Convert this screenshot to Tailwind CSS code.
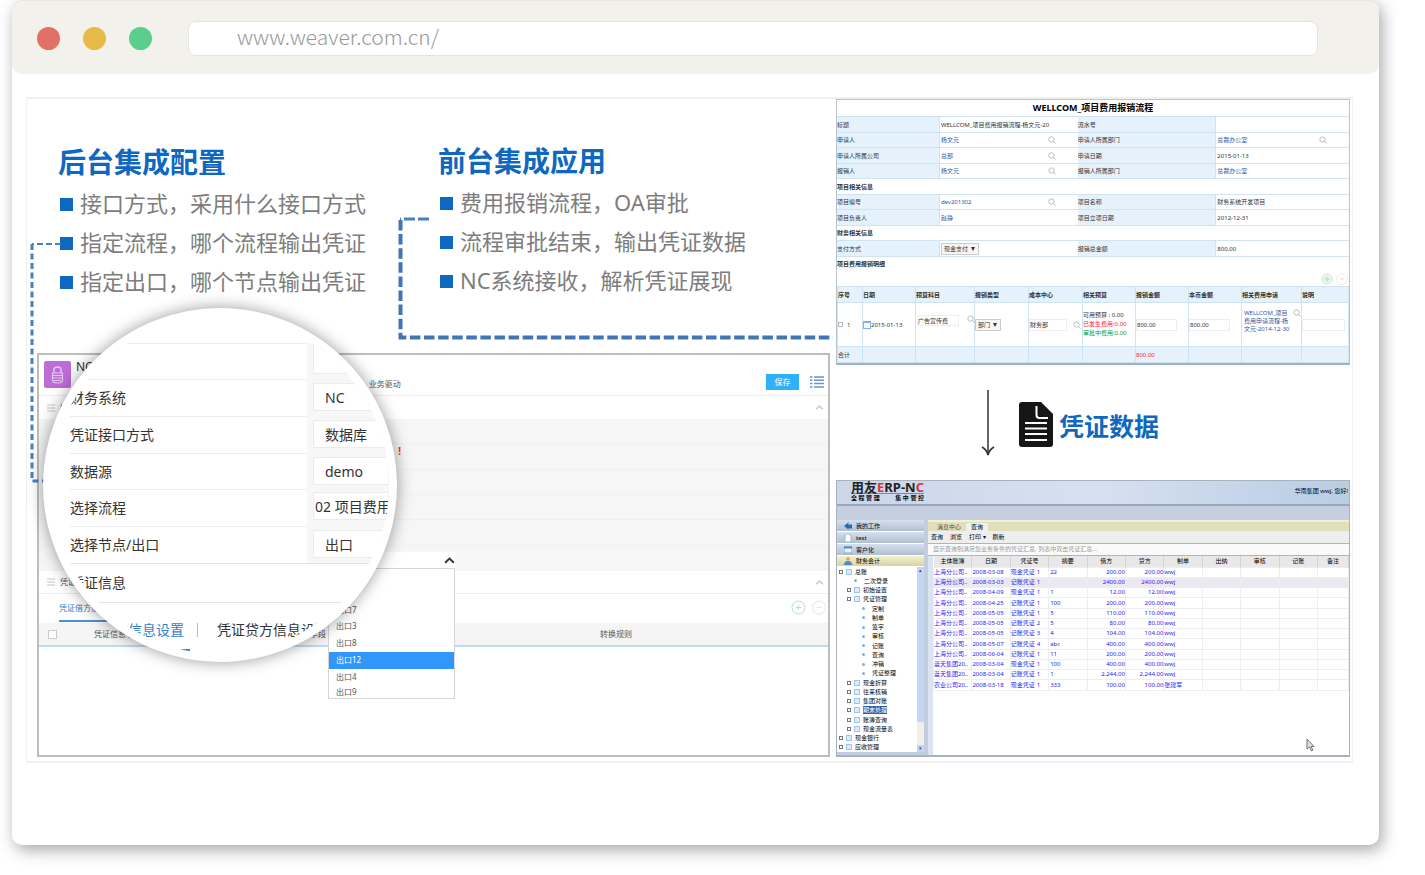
<!DOCTYPE html>
<html lang="zh-CN">
<head>
<meta charset="utf-8">
<title>www.weaver.com.cn</title>
<script src="https://cdn.jsdelivr.net/npm/@tailwindcss/browser@4"></script>
</head>
<body class="min-h-screen bg-white font-['Noto_Sans','Noto_Sans_CJK_SC',sans-serif]">
<svg class="hidden">
  <symbol id="search" viewBox="0 0 8 8"><circle cx="3.5" cy="3.5" r="2.7" fill="none" stroke="#b5b5b5" stroke-width=".9"/><path d="M5.5 5.5 7.6 7.4" stroke="#b5b5b5" stroke-width="1"/></symbol>
  <symbol id="chev" viewBox="0 0 10 6"><path d="M1 5 5 1.3 9 5" fill="none" stroke="currentColor" stroke-width="1.8"/></symbol>
  <symbol id="down" viewBox="0 0 4 4"><path d="M0 0h4L2 4z" fill="#333"/></symbol>
  <symbol id="rows" viewBox="0 0 8 8"><path d="M0 1h8M0 4h8M0 7h8" stroke="#c4c4c4" stroke-width="1"/></symbol>
</svg>
<div class="ml-3 mr-[46px] rounded-[10px] bg-white pb-[82px] shadow-[3px_5px_16px_rgba(0,0,0,0.35)]">
  <header class="flex h-[74px] items-center rounded-[10px] border-t border-[#e6e6e4] bg-[#f3f1ec] pb-[1px] pl-[25px] pr-[61px]">
    <div class="flex gap-[23px] pt-[2px]">
      <span class="size-[23px] rounded-full bg-[#e17065]"></span>
      <span class="size-[23px] rounded-full bg-[#e7bb49]"></span>
      <span class="size-[23px] rounded-full bg-[#5bcd8c]"></span>
    </div>
    <input aria-label="网址" value="www.weaver.com.cn/" class="ml-[36px] mt-[2px] h-[35px] min-w-0 flex-1 rounded-[8px] border border-[#e4e4e2] bg-white pb-[4px] pl-12 font-['Noto_Sans_CJK_SC',sans-serif] text-[21px] font-light text-[#999]">
  </header>

  <main class="relative ml-[14px] mr-[26px] mt-[23px] grid grid-cols-[803fr_514fr] gap-x-[6px] border-2 border-l border-r border-[#f0f0f0] pb-[4px] pr-[2px]">
    <svg class="pointer-events-none absolute left-0 top-0 z-10 h-[390px] w-[810px] overflow-visible" fill="none" stroke="#4a7fc0">
      <path d="M34 145H5" stroke-width="2" stroke-dasharray="6 3"/>
      <path d="M5 145V382H18" stroke-width="3" stroke-dasharray="6 3.5"/>
      <path d="M402 120H373" stroke-width="3" stroke-dasharray="11 3"/>
      <path d="M373.500 121V238.500H806" stroke-width="4" stroke="#4275b5" stroke-dasharray="10.500 3.600"/>
    </svg>

    <div class="flex flex-col">
      <section class="grid h-[254px] grid-cols-[380fr_392fr] pl-[31px] text-[22px] text-[#7d7d7d]">
        <div class="pt-[42px]">
          <h2 class="h-[43px] text-[28px] font-bold leading-[42px] text-[#0f68bf]">后台集成配置</h2>
          <ul>
            <li class="flex h-[39px] items-center gap-[7px] whitespace-nowrap pl-[2px]"><i class="mt-[2px] size-[13px] bg-[#0f68bf]"></i>接口方式，采用什么接口方式</li>
            <li class="flex h-[39px] items-center gap-[7px] whitespace-nowrap pl-[2px]"><i class="mt-[2px] size-[13px] bg-[#0f68bf]"></i>指定流程，哪个流程输出凭证</li>
            <li class="flex h-[39px] items-center gap-[7px] whitespace-nowrap pl-[2px]"><i class="mt-[2px] size-[13px] bg-[#0f68bf]"></i>指定出口，哪个节点输出凭证</li>
          </ul>
        </div>
        <div class="pt-[41px]">
          <h2 class="h-[43px] text-[28px] font-bold leading-[42px] text-[#0f68bf]">前台集成应用</h2>
          <ul>
            <li class="flex h-[39px] items-center gap-[7px] whitespace-nowrap pl-[2px]"><i class="mt-[2px] size-[13px] bg-[#0f68bf]"></i>费用报销流程，OA审批</li>
            <li class="flex h-[39px] items-center gap-[7px] whitespace-nowrap pl-[2px]"><i class="mt-[2px] size-[13px] bg-[#0f68bf]"></i>流程审批结束，输出凭证数据</li>
            <li class="flex h-[39px] items-center gap-[7px] whitespace-nowrap pl-[2px]"><i class="mt-[2px] size-[13px] bg-[#0f68bf]"></i>NC系统接收，解析凭证展现</li>
          </ul>
        </div>
      </section>

      <section class="relative ml-[10px] flex-1 border-2 border-[#bdbdbd] bg-white text-[8px] text-[#555]">
        <div class="flex h-[41px] border-b border-[#ececec] pl-[5px] pr-[4px] pt-[6px]">
          <span class="flex size-[27px] items-center justify-center rounded-[2px] bg-[#bd6dd6]">
            <svg class="h-[18px] w-[13px]" viewBox="0 0 13 18" fill="none" stroke="#e6c6f0"><path d="M3 7V4q0-3 3.500-3T10 4v3" stroke-width="1.500"/><path d="M1.500 7h10v7q0 3-5 3t-5-3zM1.500 9.500h10M1.500 12h10M3 14.500h7" stroke-width="1.200"/></svg>
          </span>
          <span class="ml-[5px] text-[12px] leading-3 text-[#333]">NC</span>
          <span class="ml-[276px] pt-[17px] leading-3">业务驱动</span>
          <button class="ml-auto mt-[13px] h-4 w-[33px] bg-[#2fb1fa] text-[8px] leading-4 text-white">保存</button>
          <svg class="ml-[11px] mt-[15px] h-3 w-[14px]" viewBox="0 0 14 12" stroke="#6c93cd" stroke-width="1.500"><path d="M0 1h2.500M4 1h10M0 4.300h2.500M4 4.300h10M0 7.600h2.500M4 7.600h10M0 11h2.500M4 11h10"/></svg>
        </div>
        <div class="flex h-[23px] items-center pl-2 pr-[4px]"><svg class="size-2"><use href="#rows"/></svg><span class="ml-[5px]">接口信息</span><svg class="ml-auto h-[5px] w-[9px] text-[#ccc]"><use href="#chev"/></svg></div>
        <div class="grid h-[152px] grid-rows-6 divide-y divide-[#f0f0f0] bg-[#f6f6f6]">
          <div></div><div class="pl-[359px] text-[11px] font-bold leading-[14px] text-[#f04030]">!</div><div></div><div></div><div></div><div></div>
        </div>
        <div class="flex h-[23px] items-center border-b border-[#ededed] pl-2 pr-[4px]"><svg class="size-2"><use href="#rows"/></svg><span class="ml-[5px]">凭证信息</span><svg class="ml-auto h-[5px] w-[9px] text-[#ccc]"><use href="#chev"/></svg></div>
        <div class="flex h-[29px] pl-5 pr-[1px]">
          <a href="#debit" class="h-[28px] border-b-2 border-[#4a90d6] text-[8px] leading-7 text-[#2f7fd0]">凭证借方信息设置</a>
          <svg class="ml-auto mt-[6px] h-[15px] w-[36px] shrink-0" viewBox="0 0 36 15" fill="none"><circle cx="7.500" cy="7.500" r="6.500" stroke="#b9e0be"/><path d="M5 7.500h5M7.500 5v5" stroke="#b9e0be"/><circle cx="28" cy="7.500" r="6.500" stroke="#efe3d9"/><path d="M25.500 7.500h5" stroke="#efe3d9"/></svg>
        </div>
        <div class="flex h-[24px] items-center border-b-2 border-[#b9dcf7] bg-[#f5f5f5] pl-[9px]">
          <input type="checkbox" aria-label="全选" class="size-[9px] appearance-none border border-[#ccc] bg-white">
          <span class="w-[220px] pl-[37px] whitespace-nowrap">凭证信息字段</span><span class="flex-1 pl-[33px]">字段</span><span class="w-[228px]">转换规则</span>
        </div>

        <div class="absolute left-[289px] top-[197px] w-[127px]">
          <button aria-label="展开出口列表" class="flex h-4 w-full items-center justify-end bg-white"><svg class="h-[7px] w-[11px] text-[#333]"><use href="#chev"/></svg></button>
          <ul role="listbox" aria-label="选择节点/出口" class="h-[131px] overflow-hidden border border-[#d5d5d5] bg-white pt-[33px] text-[8px] leading-[16px]">
            <li role="option" class="h-[16px] pl-[7px]">出口7</li><li role="option" class="h-[17px] pl-[7px]">出口3</li><li role="option" class="h-[17px] pl-[7px]">出口8</li><li role="option" aria-selected="true" class="h-[17px] bg-[#3197fd] pl-[7px] text-white">出口12</li><li role="option" class="h-[16px] pl-[7px]">出口4</li><li role="option" class="h-[13px] pl-[7px] leading-[14px]">出口9</li>
          </ul>
        </div>

        <div class="absolute left-[4px] top-[-47px] z-20 size-[354px] overflow-hidden rounded-full border-8 border-white bg-white text-[14px] text-[#333] shadow-[0_0_16px_rgba(0,0,0,0.4)]">
          <div class="h-[27px]"></div>
          <div class="ml-[19px] grid grid-cols-[237px_1fr]">
            <span class="h-[36px] border-t border-[#ededed]"></span><div class="bg-[#f7f7f7] pl-[6px] pt-[1px]"><div class="h-[30px] border border-[#ebebeb] bg-white"></div></div>
            <label for="f1" class="h-[37px] border-t border-[#ededed] leading-[35px]">财务系统</label><div class="bg-[#f7f7f7] pl-[6px] pt-[4px]"><input id="f1" value="NC" class="h-[28px] w-full border border-[#ebebeb] bg-white pl-[11px]"></div>
            <label for="f2" class="h-[37px] border-t border-[#ededed] leading-[35px]">凭证接口方式</label><div class="bg-[#f7f7f7] pl-[6px] pt-[4px]"><input id="f2" value="数据库" class="h-[28px] w-full border border-[#ebebeb] bg-white pl-[11px]"></div>
            <label for="f3" class="h-[36px] border-t border-[#ededed] leading-[35px]">数据源</label><div class="bg-[#f7f7f7] pl-[6px] pt-[4px]"><input id="f3" value="demo" class="h-[28px] w-full border border-[#ebebeb] bg-white pl-[11px]"></div>
            <label for="f4" class="h-[37px] border-t border-[#ededed] leading-[35px]">选择流程</label><div class="bg-[#f7f7f7] pl-[6px] pt-[3px]"><input id="f4" value="02 项目费用" class="h-[28px] w-full border border-[#ebebeb] bg-white pl-[1px]"></div>
            <label for="f5" class="h-[37px] border-t border-[#ededed] leading-[35px]">选择节点/出口</label><div class="bg-[#f7f7f7] pl-[6px] pt-[4px]"><input id="f5" value="出口" class="h-[28px] w-full border border-[#ebebeb] bg-white pl-[11px]"></div>
          </div>
          <div class="ml-[19px] h-[40px] border-y border-[#e4e4e4] leading-[37px]">凭证信息</div>
          <div class="flex h-[46px] whitespace-nowrap pl-[21px] leading-[54px]"><a href="#debit" class="text-[#2f7fd0]">凭证借方信息设置</a><span class="ml-[13px] mt-[20px] h-[14px] w-px bg-[#bbb]"></span><a href="#credit" class="ml-[19px]">凭证贷方信息设置</a></div>
          <div class="ml-[119px] h-[2px] w-5 bg-[#2f8ee0]"></div>
        </div>
      </section>
    </div>

    <div class="min-w-0 text-[6px] leading-[8px] text-[#333]">
      <section class="border border-[#b8c4d0] border-b-2 border-b-[#9fb0c2] bg-white">
        <h3 class="h-[16px] text-center text-[9px] font-bold leading-[16px] text-black">WELLCOM_项目费用报销流程</h3>
        <table class="w-full table-fixed border-collapse">
          <colgroup><col class="w-[20%]"><col class="w-[27%]"><col class="w-[27%]"><col></colgroup>
          <tbody id="form"></tbody>
        </table>
        <h4 class="h-[15px] font-bold leading-[15px]">项目费用报销明细</h4>
        <div class="flex h-[14px] items-center justify-end"><svg class="h-3 w-[28px]" viewBox="0 0 28 12" fill="none"><circle cx="6" cy="6" r="5.500" fill="#e6f5e6" stroke="#e0f1e0"/><path d="M3.500 6h5M6 3.500v5" stroke="#b8dfb8"/><circle cx="21" cy="6" r="5.500" stroke="#f3ebe2"/><path d="M18.500 6h5" stroke="#ecdccd"/></svg></div>
        <table class="w-full table-fixed border-collapse text-left whitespace-nowrap [&_td]:border [&_td]:border-[#cfe3f3] [&_td]:p-0 [&_th]:border [&_th]:border-[#cfe3f3] [&_th]:p-0">
          <colgroup><col class="w-[25px]"><col class="w-[53px]"><col class="w-[59px]"><col class="w-[54px]"><col class="w-[54px]"><col class="w-[53px]"><col class="w-[53px]"><col class="w-[53px]"><col class="w-[60px]"><col></colgroup>
          <tr class="h-4 bg-[#e5f2fc]"><th>序号</th><th>日期</th><th>预算科目</th><th>报销类型</th><th>成本中心</th><th>相关预算</th><th>报销金额</th><th>本币金额</th><th>相关费用申请</th><th>说明</th></tr>
          <tr class="h-[44px]">
            <td><div class="flex items-center gap-1"><input type="checkbox" aria-label="选择第1行" class="size-[5px] appearance-none border border-[#bbb]"><span>1</span></div></td>
            <td><div class="flex items-center"><i class="size-2 border border-t-2 border-[#7db4e6]"></i>2015-01-13</div></td>
            <td><div class="flex items-start pb-2 pl-[1px]"><input aria-label="预算科目" value="广告宣传费" class="h-[11px] w-[42px] border border-[#eee]"><svg class="ml-2 size-2 shrink-0"><use href="#search"/></svg></div></td>
            <td><div class="flex h-3 w-[26px] items-center border border-[#ccc] bg-[#f5f5f5] pr-[3px]"><select aria-label="报销类型" class="min-w-0 flex-1 appearance-none pl-[2px]"><option>部门</option></select><svg class="size-[4px]"><use href="#down"/></svg></div></td>
            <td><div class="flex items-center"><input aria-label="成本中心" value="财务部" class="h-3 w-[38px] border border-[#eee]"><svg class="ml-[6px] size-2 shrink-0"><use href="#search"/></svg></div></td>
            <td class="leading-[9px]">可用预算 : 0.00<br><span class="text-[#f22]">已发生费用:0.00</span><br><span class="text-[#0a9a2a]">审批中费用:0.00</span></td>
            <td><input aria-label="报销金额" value="800.00" class="h-3 w-[41px] border border-[#eee]"></td>
            <td><input aria-label="本币金额" value="800.00" class="h-3 w-[41px] border border-[#eee]"></td>
            <td><div class="flex items-start pb-2 text-[#2b5aa8]"><a href="#req" class="w-[49px] whitespace-normal break-all pl-[2px]">WELLCOM_项目费用申请流程-杨文元-2014-12-30</a><svg class="ml-[2px] size-2 shrink-0"><use href="#search"/></svg></div></td>
            <td><input aria-label="说明" class="h-3 w-[43px] border border-[#eee]"></td>
          </tr>
          <tr class="h-[16px] bg-[#e5f2fc]"><td>合计</td><td></td><td></td><td></td><td></td><td></td><td class="text-[#f22]">800.00</td><td></td><td></td><td></td></tr>
        </table>
      </section>

      <div class="flex h-[115px] items-start pl-[145px] pt-[25px]">
        <svg class="h-[68px] w-[14px]" viewBox="0 0 14 68" fill="none" stroke="#333"><path d="M7 0v65" stroke-width="1.500"/><path d="M1 57q5 3 6 8q1-5 6-8" stroke-width="1.700"/></svg>
        <svg class="ml-[24px] mt-3 h-[45px] w-[34px]" viewBox="0 0 34 45"><path d="M3 0h19l12 12v30q0 3-3 3H3q-3 0-3-3V3q0-3 3-3z" fill="#161616"/><path d="M17.500 4v9q0 3 3 3H29M6 21h22M6 26.500h22M6 32h22M6 38h22" fill="none" stroke="#fff" stroke-width="2"/></svg>
        <h2 class="ml-[6px] mt-4 text-[25px] font-bold leading-[40px] text-[#0f68bf]">凭证数据</h2>
      </div>

      <section class="border border-[#a9b2bd] border-b-2">
        <header class="flex h-[25px] items-start justify-between border-b-2 border-[#94a8c2] bg-linear-to-r from-[#cbd6ea] via-[#d7e0f2] to-[#b9cde3] pl-[14px] pr-[1px]">
          <div class="text-black">
            <div class="h-[12px] text-[13px] font-bold leading-[13px] text-[#222]">用友<span class="text-[#e03434]">E</span>RP-N<span class="text-[#e03434]">C</span></div>
            <div class="flex justify-between border-t border-[#e06060] text-[6px] font-bold leading-[8px]"><span>全 程 管 理</span><span>集 中 管 控</span></div>
          </div>
          <span class="pt-[6px] text-black">华南集团 wwj, 您好!</span>
        </header>
        <div class="h-[14px] bg-[#c5cfdf]"></div>
        <div class="grid grid-cols-[87px_1fr] gap-x-1 bg-[#c2cede]">
          <nav class="text-black">
            <a href="#mine" class="flex h-3 items-center gap-1 border-b border-white bg-linear-to-b from-[#d6e0ec] to-[#b0bfd2] pl-[7px]"><svg class="h-2 w-2" viewBox="0 0 8 8"><path d="M0 4 5 0 4 2.500h4v4H4L5 8z" fill="#2a68b4"/></svg>我的工作</a>
            <a href="#test" class="flex h-3 items-center gap-1 border-b border-white bg-linear-to-b from-[#d6e0ec] to-[#b0bfd2] pl-[7px]"><svg class="h-2 w-2" viewBox="0 0 8 8"><path d="M1 0h4l2 2v6H1z" fill="#fff" stroke="#8fb5dd"/></svg>test</a>
            <a href="#client" class="flex h-3 items-center gap-1 border-b border-white bg-linear-to-b from-[#d6e0ec] to-[#b0bfd2] pl-[7px]"><svg class="h-2 w-2" viewBox="0 0 8 8"><path d="M0 1h8v6H0z" fill="#eaf3ff" stroke="#79a5d8"/><path d="M0 1.500h8" stroke="#4e86c8" stroke-width="2"/></svg>客户化</a>
            <a href="#finance" class="flex h-[11px] items-center gap-1 border-b border-white bg-linear-to-b from-[#f3f0cf] to-[#d9d3a0] pl-[7px]"><svg class="h-2 w-2" viewBox="0 0 8 8"><circle cx="4" cy="2" r="1.800" fill="#e3a04c"/><path d="M0 8q0-4 4-4t4 4z" fill="#4a8ad0"/></svg>财务会计</a>
            <div class="flex h-[185px] bg-white">
              <ul id="tree" class="grid flex-1 grid-rows-[repeat(20,minmax(0,1fr))]"></ul>
              <div class="flex w-[7px] flex-col justify-between bg-[#f2efe6] text-center text-[5px] leading-[7px] text-[#446]"><span class="h-[155px] bg-[#c3d5f5]">▴</span><span class="bg-[#c3d5f5]">▾</span></div>
            </div>
          </nav>
          <div class="min-w-0 bg-white text-black">
            <div class="flex h-[11px] items-center border-t-2 border-[#f0f0dc] bg-[#dfdfbb] pl-[9px]"><a href="#msg" class="text-[#7a3c20]">消息中心</a><a href="#query" class="ml-[5px] rounded-t-[2px] bg-[#eef2f0] px-[5px]">查询</a></div>
            <div class="flex h-[12px] items-center gap-[7px] bg-[#eee] pl-[3px]"><button>查询</button><button>浏览</button><button>打印 ▾</button><button>刷新</button></div>
            <div class="h-[13px] border-y border-[#9fb9d4] bg-[#fafafa] pl-[5px] leading-[11px] text-[#999]">显示查询到满足您业务条件的凭证汇总, 列表中双击凭证汇总...</div>
            <div class="border-l-[5px] border-[#dbe5f2] pb-[64px]">
              <table class="w-full table-fixed border-collapse whitespace-nowrap">
                <thead><tr class="h-[11px] bg-[#e8e8e8] [&_th]:border-r [&_th]:border-[#d4d4d4] [&_th]:p-0 [&_th]:font-normal"><th>主体账簿</th><th>日期</th><th>凭证号</th><th>摘要</th><th>借方</th><th>贷方</th><th>制单</th><th>出纳</th><th>审核</th><th>记账</th><th class="w-[31px]">备注</th></tr></thead>
                <tbody id="ledger" class="text-[#2323f5]"></tbody>
              </table>
            </div>
          </div>
        </div>
      </section>
    </div>
    <svg class="absolute bottom-[9px] right-[37px] h-[14px] w-[9px]" viewBox="0 0 9 14"><path d="M1 1v10l2.500-2 2 4 1.500-1-2-3.500H8z" fill="#ddd" stroke="#777"/></svg>
  </main>
</div>
<script>
const link = s => `<span class="text-[#2b5aa8]">${s}</span>`;
const find = s => `<div class="flex items-center">${link(s)}<svg class="ml-auto mr-[22px] size-2"><use href="#search"/></svg></div>`;
const pay = '<div class="flex h-3 w-[38px] items-center border border-[#ccc] bg-[#f5f5f5] pr-[3px]"><select aria-label="支付方式" class="min-w-0 flex-1 appearance-none pl-[2px]"><option>现金支付</option></select><svg class="size-[4px]"><use href="#down"/></svg></div>';
const form = [
  ['标题', 'WELLCOM_项目费用报销流程-杨文元-20', '流水号', ''],
  ['申请人', find('杨文元'), '申请人所属部门', find('总裁办公室')],
  ['申请人所属公司', find('总部'), '申请日期', '2015-01-13'],
  ['报销人', find('杨文元'), '报销人所属部门', link('总裁办公室')],
  ['项目相关信息'],
  ['项目编号', find('dev201302'), '项目名称', '财务系统开发项目'],
  ['项目负责人', link('赵静'), '项目立项日期', '2012-12-31'],
  ['财务相关信息'],
  ['支付方式', pay, '报销总金额', '800.00'],
];
document.getElementById('form').innerHTML = form.map((r, i) => {
  const h = i % 2 ? 'h-[15px]' : 'h-4';
  if (r.length === 1) return `<tr class="${h}"><th colspan="4" class="border-y border-[#cfe3f3] p-0 text-left font-bold">${r[0]}</th></tr>`;
  return `<tr class="${h}">` + r.map((c, k) => k % 2
    ? `<td class="border-y border-[#cfe3f3] p-0 pl-[1px] whitespace-nowrap">${c}</td>`
    : `<th class="border border-l-0 border-[#cfe3f3] bg-[#e5f2fc] p-0 text-left font-normal">${c}</th>`).join('') + '</tr>';
}).join('');

const tree = [[0,'总账'],[1,'二次登录'],[1,'初始设置'],[1,'凭证管理'],[2,'定制'],[2,'制单'],[2,'签字'],[2,'审核'],[2,'记账'],[2,'查询'],[2,'冲销'],[2,'凭证整理'],[1,'现金折算'],[1,'往来核销'],[1,'集团对账'],[1,'期末处理'],[1,'账簿查询'],[1,'现金流量表'],[0,'现金银行'],[0,'应收管理']];
const pads = ['pl-[2px]', 'pl-[10px]', 'pl-[18px]'];
document.getElementById('tree').innerHTML = tree.map(([d, t], i) => {
  const leaf = d === 2 || i === 1;
  const box = leaf ? '<i class="w-[4px]"></i><i class="size-[3px] rounded-full bg-[#7fb2e0]"></i><i class="w-[1px]"></i>'
    : '<i class="size-[4px] border border-[#777]"></i><i class="size-[6px] border border-[#9cc4ee] bg-[#dcebfb]"></i>';
  const on = i === 15 ? 'bg-[#2a62ae] text-white' : '';
  return `<li class="flex items-center gap-[3px] whitespace-nowrap ${pads[d]}">${box}<span class="${on}">${t}</span></li>`;
}).join('');

const sh = '上海分公司..', lt = '蓝天集团20..';
const ledger = [
  [sh,'2008-03-08','现金凭证','1','22','200.00'],
  [sh,'2008-03-03','记账凭证','1','','2400.00'],
  [sh,'2008-04-09','现金凭证','1','1','12.00'],
  [sh,'2008-04-25','记账凭证','1','100','200.00'],
  [sh,'2008-05-05','记账凭证','1','5','110.00'],
  [sh,'2008-05-05','记账凭证','2','5','80.00'],
  [sh,'2008-05-05','记账凭证','3','4','104.00'],
  [sh,'2008-05-07','记账凭证','4','abc','400.00'],
  [sh,'2008-06-04','记账凭证','1','11','200.00'],
  [lt,'2008-03-04','现金凭证','1','100','400.00'],
  [lt,'2008-03-04','记账凭证','1','1','2,244.00'],
  ['农业公司20..','2008-03-18','现金凭证','1','333','100.00'],
];
const td = (c, x = '') => `<td class="border border-[#ededf2] p-0 ${x}">${c}</td>`;
document.getElementById('ledger').innerHTML = ledger.map((r, i) =>
  `<tr class="${i % 4 === 3 ? 'h-[11px]' : 'h-[10px]'} ${i === 1 ? 'bg-[#ece8f0]' : ''}">` +
  td(r[0]) + td(r[1]) + td(`<div class="flex justify-between pr-2"><span>${r[2]}</span><span>${r[3]}</span></div>`) + td(r[4], 'pl-[1px]') +
  td(r[5], 'text-right') + td(r[5], 'text-right') + td(i === 11 ? '张建军' : 'wwj') + td('') + td('') + td('') + td('') + '</tr>').join('');
</script>
</body>
</html>
